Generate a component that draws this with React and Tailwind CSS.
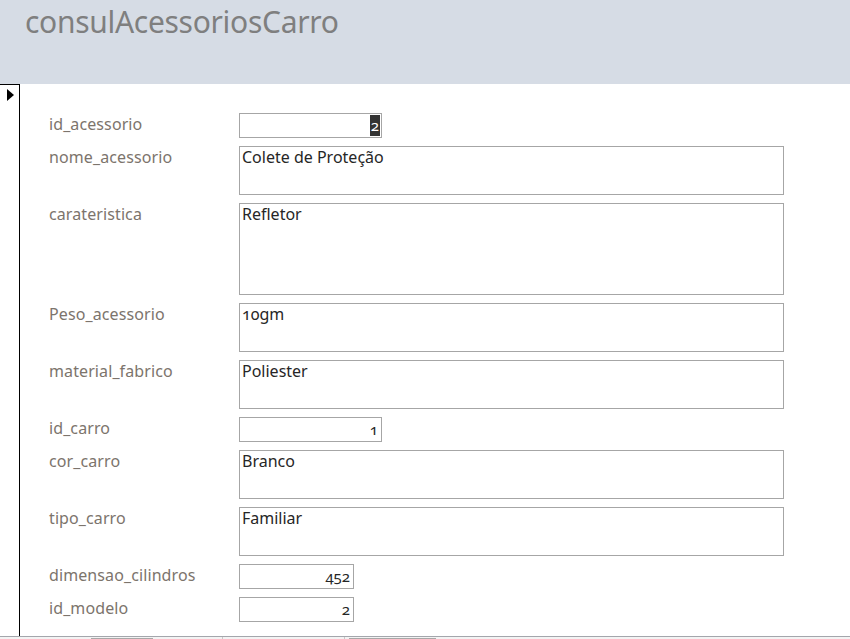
const fields = [
  { label: 'id_acessorio', value: '2', kind: 'num', w: 'w-[143px]', h: 'h-[25px]', selected: true },
  { label: 'nome_acessorio', value: 'Colete de Proteção', kind: 'text', w: 'w-[545px]', h: 'h-[49px]' },
  { label: 'carateristica', value: 'Refletor', kind: 'text', w: 'w-[545px]', h: 'h-[92px]' },
  { label: 'Peso_acessorio', value: '10gm', kind: 'text', w: 'w-[545px]', h: 'h-[49px]' },
  { label: 'material_fabrico', value: 'Poliester', kind: 'text', w: 'w-[545px]', h: 'h-[49px]' },
  { label: 'id_carro', value: '1', kind: 'num', w: 'w-[143px]', h: 'h-[25px]' },
  { label: 'cor_carro', value: 'Branco', kind: 'text', w: 'w-[545px]', h: 'h-[49px]' },
  { label: 'tipo_carro', value: 'Familiar', kind: 'text', w: 'w-[545px]', h: 'h-[49px]' },
  { label: 'dimensao_cilindros', value: '452', kind: 'num', w: 'w-[115px]', h: 'h-[25px]' },
  { label: 'id_modelo', value: '2', kind: 'num', w: 'w-[115px]', h: 'h-[25px]' },
];

const FieldBox = ({ field }) => {
  if (field.kind === 'num') {
    return (
      <div className={`${field.w} ${field.h} border border-[#a6a6a6] bg-white flex items-center justify-end pr-[1px] text-[15px] text-[#262626] oldstyle-nums`}>
        {field.selected ? (
          <span className="bg-[#333333] text-white h-[21px] leading-[21px] px-[1px]">{field.value}</span>
        ) : (
          <span className="pr-[2px]">{field.value}</span>
        )}
      </div>
    );
  }
  return (
    <div className={`${field.w} ${field.h} border border-[#a6a6a6] bg-white pl-[2px] text-[16px] leading-5 text-[#262626] oldstyle-nums`}>
      {field.value}
    </div>
  );
};

export default function App() {
  return (
    <div className="w-[850px] h-[639px] overflow-hidden bg-white flex flex-col" style={{ fontFamily: '"Noto Sans", "Open Sans", sans-serif' }}>
      {/* Form header */}
      <div className="h-[84px] bg-[#d6dce5] pl-[25px] pt-[1px] shrink-0">
        <h1 className="text-[30px] leading-[42px] text-[#7f7f7f] tracking-[-0.3px]">consulAcessoriosCarro</h1>
      </div>

      {/* Detail section */}
      <div className="flex h-[552px] shrink-0">
        <div className="w-[20px] border-t border-r border-black shrink-0 pt-[4px] pl-[7px]">
          <svg width="7" height="12" viewBox="0 0 7 12">
            <polygon points="0,0 7,6 0,12" fill="#000" />
          </svg>
        </div>
        <div className="flex-1 pt-[29px] pl-[29px] flex flex-col gap-2">
          {fields.map((f) => (
            <div key={f.label} className="flex items-start">
              <div className="w-[190px] text-[16px] leading-5 text-[#7c746c] pt-[1px] tracking-[0.1px]">{f.label}</div>
              <FieldBox field={f} />
            </div>
          ))}
        </div>
      </div>

      {/* Bottom navigation strip */}
      <div className="flex-1 border-t border-[#a4a6ac] bg-[#f3f3f3] flex items-end">
        <div className="w-[91px]" />
        <div className="w-[62px] h-[1px] bg-[#a8a8a8]" />
        <div className="w-[69px]" />
        <div className="w-[1px] h-full bg-[#c8c8c8]" />
        <div className="w-[121px]" />
        <div className="w-[1px] h-full bg-[#c8c8c8]" />
        <div className="w-[4px]" />
        <div className="w-[87px] h-[1px] bg-[#a8a8a8]" />
      </div>
    </div>
  );
}
